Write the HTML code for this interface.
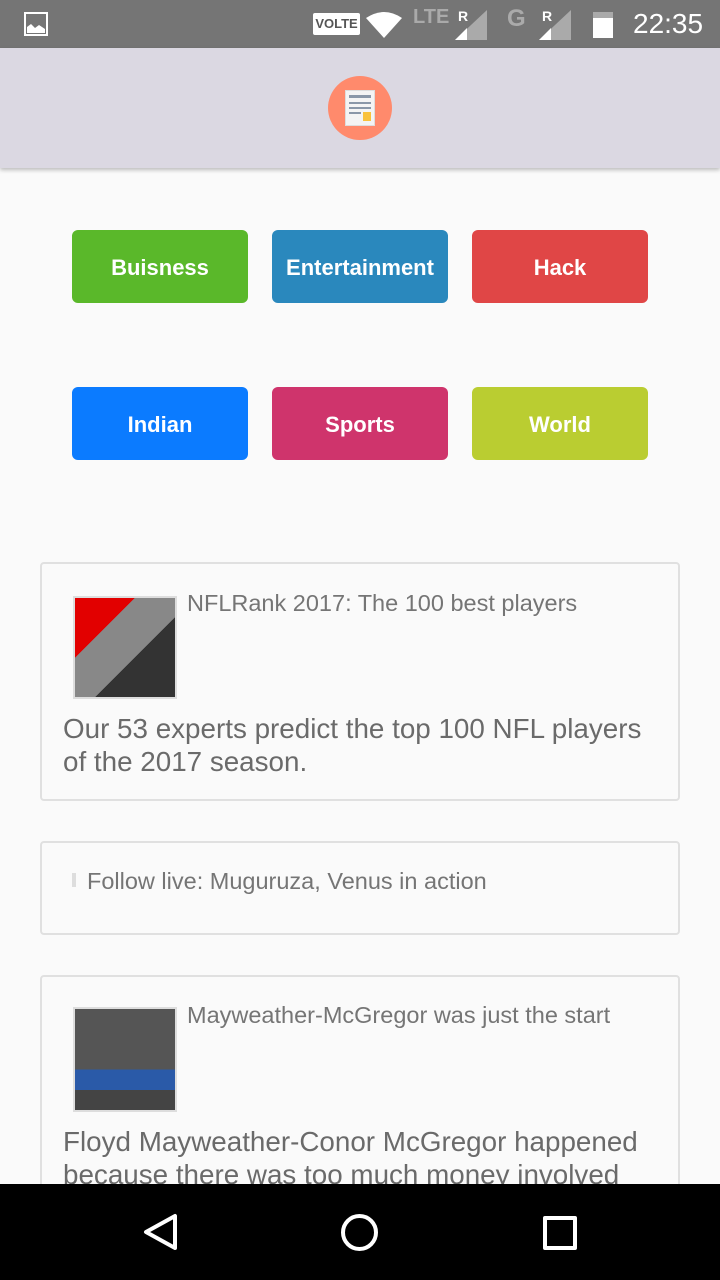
<!DOCTYPE html>
<html><head><meta charset="utf-8"><style>
*{margin:0;padding:0;box-sizing:border-box}
body{width:720px;height:1280px;overflow:hidden;background:#fafafa;font-family:"Liberation Sans",Roboto,sans-serif;position:relative}
.sb{position:absolute;top:0;left:0;width:720px;height:48px;background:#757575;color:#fff}
.ab{position:absolute;top:48px;left:0;width:720px;height:120px;background:#dbd8e2;box-shadow:0 2px 4px rgba(0,0,0,.25)}
.btn{position:absolute;width:176px;height:73px;border-radius:6px;color:#fff;font-weight:bold;font-size:22px;display:flex;align-items:center;justify-content:center;padding-top:2px}
.card{position:absolute;left:40px;width:640px;border:2px solid #e0e0e0;border-radius:4px;background:#fafafa;overflow:hidden}
.t{color:#757575;font-size:23.5px}
.d{color:#6a6a6a;font-size:27.8px;line-height:33px}
.nav{position:absolute;top:1184px;left:0;width:720px;height:96px;background:#000}
</style></head><body>
<div class="sb">
<svg style="position:absolute;left:24px;top:12px" width="24" height="24"><rect x="1" y="1" width="22" height="22" fill="none" stroke="#fff" stroke-width="2"/><path d="M3 21V15L7 12L11 16L15 13L21 17V21Z" fill="#fff"/></svg>
<div style="position:absolute;left:313px;top:13px;width:47px;height:22px;background:#fff;border-radius:2px;color:#555;font-size:13px;font-weight:bold;text-align:center;line-height:22px">VOLTE</div>
<svg style="position:absolute;left:366px;top:12px" width="36" height="26"><path d="M0 6 Q18 -6 36 6 L18 26Z" fill="#fff"/></svg>
<div style="position:absolute;left:413px;top:6px;font-size:20px;color:#aaa;font-weight:bold">LTE</div>
<div style="position:absolute;left:458px;top:8px;font-size:14px;font-weight:bold">R</div>
<svg style="position:absolute;left:455px;top:10px" width="32" height="30"><path d="M32 0V30H0Z" fill="#aaa"/><path d="M12 18V30H0Z" fill="#fff"/></svg>
<div style="position:absolute;left:507px;top:5px;font-size:24px;color:#aaa;font-weight:bold">G</div>
<div style="position:absolute;left:542px;top:8px;font-size:14px;font-weight:bold">R</div>
<svg style="position:absolute;left:539px;top:10px" width="32" height="30"><path d="M32 0V30H0Z" fill="#aaa"/><path d="M12 18V30H0Z" fill="#fff"/></svg>
<div style="position:absolute;left:593px;top:12px;width:20px;height:26px;background:#fff;border-top:6px solid #aaa"></div>
<div style="position:absolute;left:633px;top:8px;font-size:28px">22:35</div>
</div>
<div class="ab">
<div style="position:absolute;left:328px;top:28px;width:64px;height:64px;border-radius:50%;background:#ff8a6c"></div>
<div style="position:absolute;left:345px;top:42px;width:30px;height:36px;background:#f4f4f4;border:1px solid #ddd"></div>
<div style="position:absolute;left:349px;top:47px;width:22px;height:3px;background:#8a97a8"></div>
<div style="position:absolute;left:349px;top:54px;width:22px;height:2px;background:#8a97a8"></div>
<div style="position:absolute;left:349px;top:59px;width:22px;height:2px;background:#8a97a8"></div>
<div style="position:absolute;left:349px;top:64px;width:12px;height:2px;background:#8a97a8"></div>
<div style="position:absolute;left:363px;top:64px;width:8px;height:9px;background:#f9c23c"></div>
</div>
<div class="btn" style="left:72px;top:230px;background:#5ab82a">Buisness</div>
<div class="btn" style="left:272px;top:230px;background:#2a88bd">Entertainment</div>
<div class="btn" style="left:472px;top:230px;background:#e04646">Hack</div>
<div class="btn" style="left:72px;top:387px;background:#0b7bff">Indian</div>
<div class="btn" style="left:272px;top:387px;background:#cf346c">Sports</div>
<div class="btn" style="left:472px;top:387px;background:#bacd31">World</div>

<div class="card" style="top:562px;height:239px">
<div style="position:absolute;left:31px;top:32px;width:104px;height:103px;border:2px solid #ddd;background:linear-gradient(135deg,#e20000 0 30%,#888 30% 60%,#333 60%)"></div>
<div class="t" style="position:absolute;left:145px;top:26px">NFLRank 2017: The 100 best players</div>
<div class="d" style="position:absolute;left:21px;top:148px">Our 53 experts predict the top 100 NFL players<br>of the 2017 season.</div>
</div>
<div class="card" style="top:841px;height:94px">
<div style="position:absolute;left:30px;top:30px;width:4px;height:14px;background:#ddd"></div>
<div class="t" style="position:absolute;left:45px;top:25px">Follow live: Muguruza, Venus in action</div>
</div>
<div class="card" style="top:975px;height:260px">
<div style="position:absolute;left:31px;top:30px;width:104px;height:105px;border:2px solid #ddd;background:linear-gradient(#555 0 60%,#2a5aa8 60% 80%,#444 80%)"></div>
<div class="t" style="position:absolute;left:145px;top:25px">Mayweather-McGregor was just the start</div>
<div class="d" style="position:absolute;left:21px;top:148px">Floyd Mayweather-Conor McGregor happened<br>because there was too much money involved</div>
</div>
<div class="nav">
<svg style="position:absolute;left:140px;top:28px" width="40" height="40"><path d="M35 4V36L6 20Z" fill="none" stroke="#fff" stroke-width="4" stroke-linejoin="round"/></svg>
<div style="position:absolute;left:341px;top:30px;width:37px;height:37px;border:4px solid #fff;border-radius:50%"></div>
<div style="position:absolute;left:543px;top:32px;width:34px;height:34px;border:4px solid #fff;border-radius:2px"></div>
</div>
</body></html>
